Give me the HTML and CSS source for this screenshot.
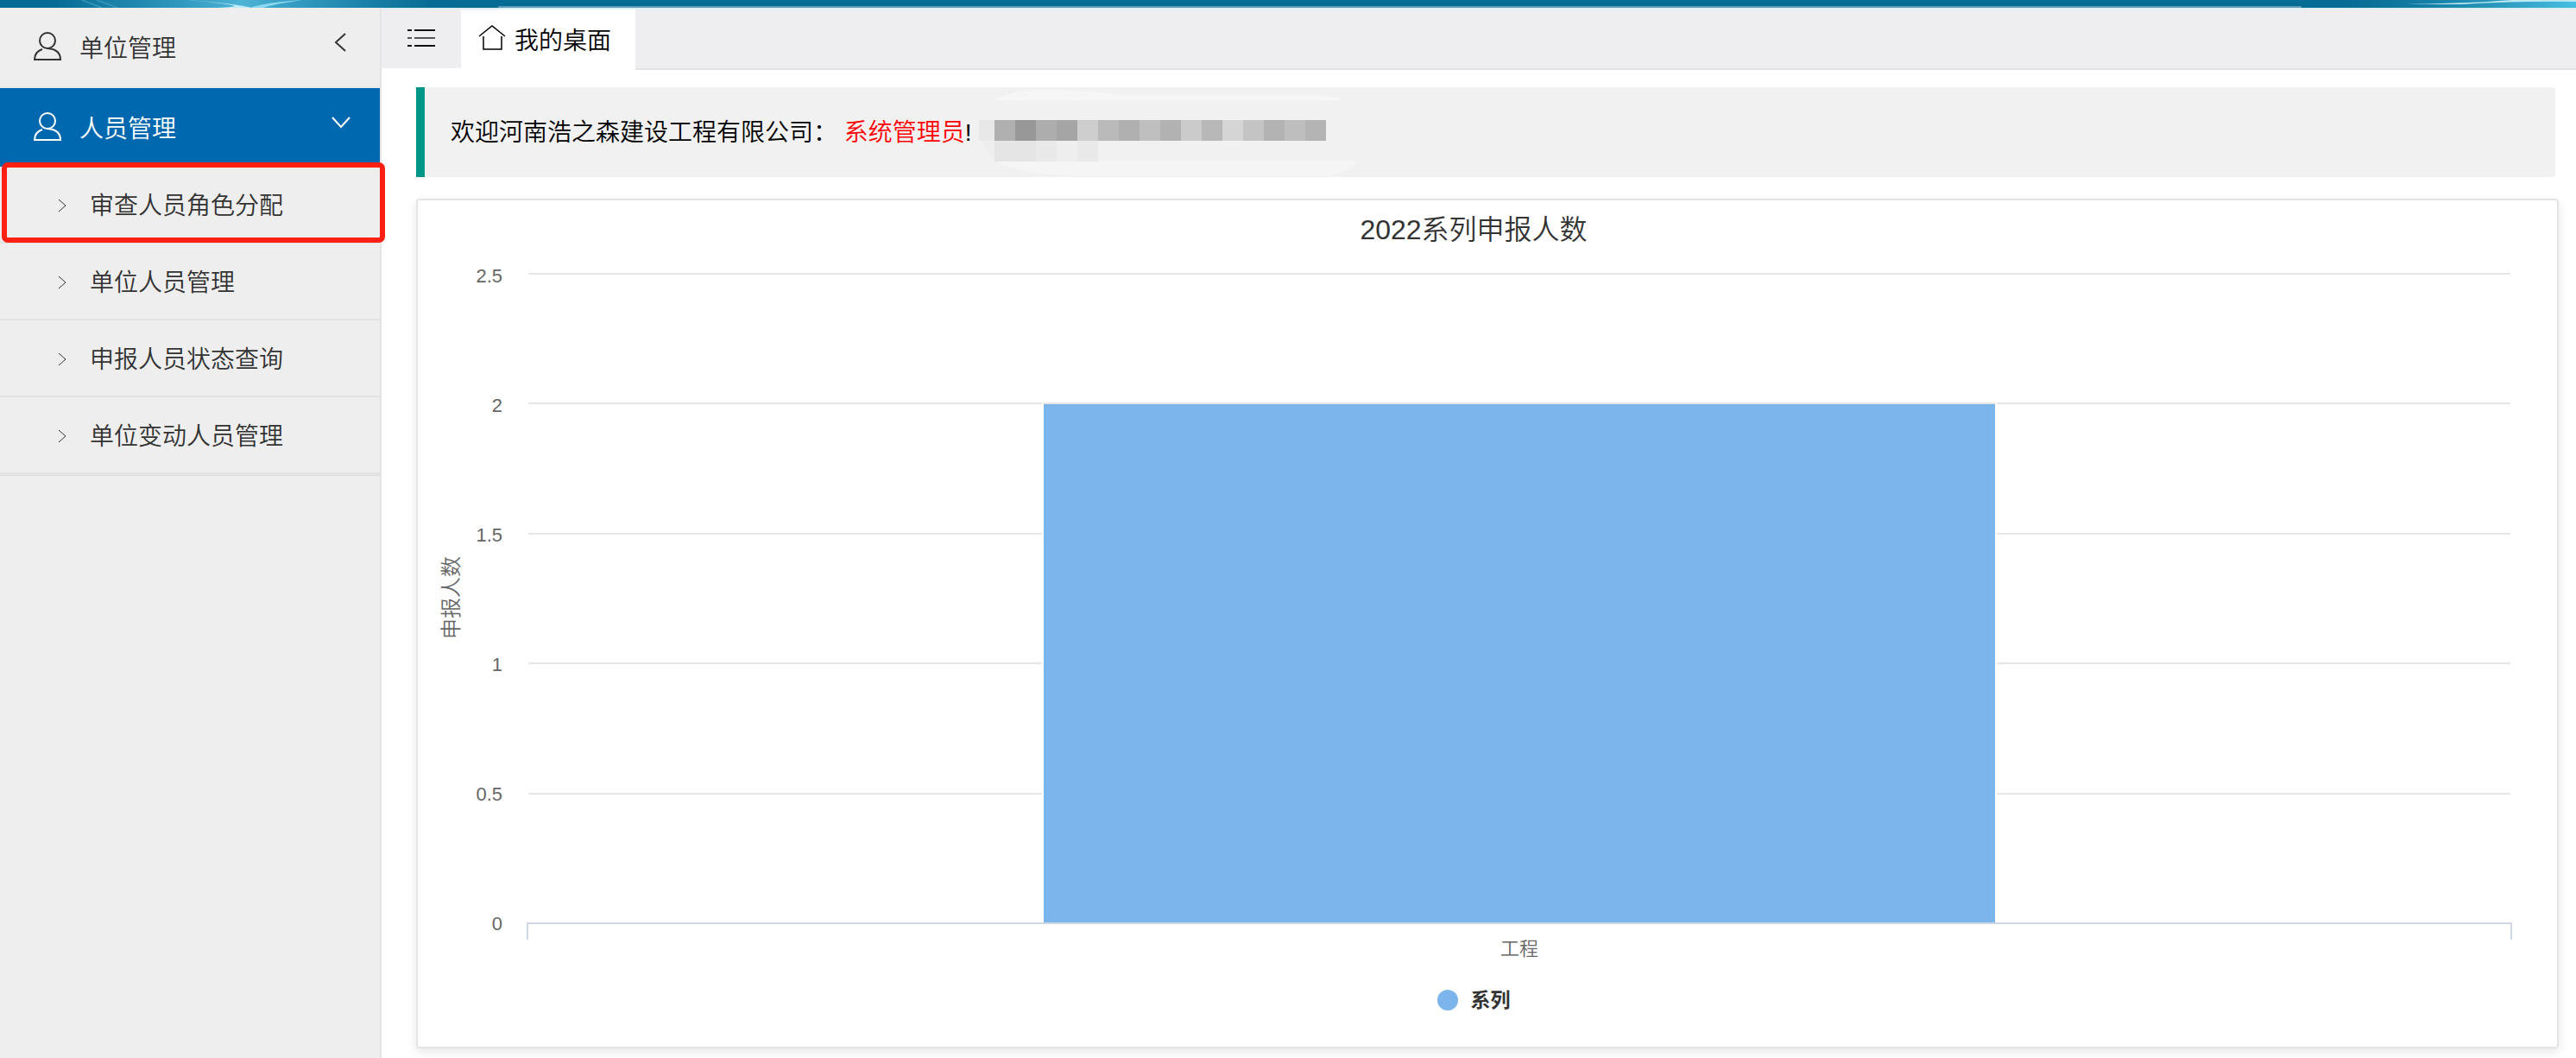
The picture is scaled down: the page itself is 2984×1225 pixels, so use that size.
FILE: index.html
```html
<!DOCTYPE html>
<html lang="zh-CN">

<head>
  <meta charset="UTF-8">
  <meta name="viewport" content="width=device-width, initial-scale=1.0">
  <title>我的桌面</title>
  <link rel="stylesheet" href="styles.css">
</head>

<body>
  <header class="banner">
    <svg width="577" height="9" viewBox="0 0 577 9">
      <defs>
        <linearGradient id="glow">
          <stop offset="0" stop-color="#3aa3c9" stop-opacity="0" />
          <stop offset="0.5" stop-color="#4db4d6" />
          <stop offset="1" stop-color="#3aa3c9" stop-opacity="0" />
        </linearGradient>
      </defs>
      <rect x="60" width="440" height="9" fill="url(#glow)" />
      <path d="M95 0 L118 9 M112 0 L136 9" stroke="#4fa9c8" stroke-width="2" opacity=".5" />
      <path d="M215 0 Q262 3 292 9 L250 9 Q285 8 262 5 Q245 2 215 0Z" fill="#bdeaf6" />
      <path d="M290 9 Q305 3 350 0 L325 4 Q310 7 305 9Z" fill="#8ad9f0" />
    </svg>
    <i class="banner-line"></i>
    <svg width="318" height="9" viewBox="66 0 318 9">
      <defs>
        <linearGradient id="glow2">
          <stop offset="0" stop-color="#2b93b8" stop-opacity="0" />
          <stop offset="1" stop-color="#48c0e2" />
        </linearGradient>
      </defs>
      <rect x="120" width="264" height="9" fill="url(#glow2)" />
      <path d="M180 5 Q260 4 310 0 L384 0 L384 2 Q320 1 250 5Z" fill="#bdeaf2" />
    </svg>
  </header>
  <div class="wrap">
    <nav class="side">
      <ul class="menu">
        <li>
          <a class="menu-item" href="#">
            <svg class="icon-user" viewBox="0 0 34 34">
              <circle cx="17" cy="10" r="9" />
              <path d="M11 20 Q2 23 2 32 H32 Q32 20 17 19" />
            </svg>
            <span>单位管理</span>
            <svg class="arrow" viewBox="0 0 22 22"><path d="M16 1 L5 11 L16 21" /></svg>
          </a>
        </li>
        <li>
          <a class="menu-item active" href="#">
            <svg class="icon-user" viewBox="0 0 34 34">
              <circle cx="17" cy="10" r="9" />
              <path d="M11 20 Q2 23 2 32 H32 Q32 20 17 19" />
            </svg>
            <span>人员管理</span>
            <svg class="arrow" viewBox="0 0 22 22"><path d="M1 5 L11 16 L21 5" /></svg>
          </a>
          <ul class="sub-menu">
            <li class="marked"><a href="#"><svg class="sub-arrow" viewBox="0 0 10 16"><path d="M1 1 L9 8 L1 15" /></svg>审查人员角色分配</a></li>
            <li><a href="#"><svg class="sub-arrow" viewBox="0 0 10 16"><path d="M1 1 L9 8 L1 15" /></svg>单位人员管理</a></li>
            <li><a href="#"><svg class="sub-arrow" viewBox="0 0 10 16"><path d="M1 1 L9 8 L1 15" /></svg>申报人员状态查询</a></li>
            <li><a href="#"><svg class="sub-arrow" viewBox="0 0 10 16"><path d="M1 1 L9 8 L1 15" /></svg>单位变动人员管理</a></li>
          </ul>
        </li>
      </ul>
    </nav>
    <main class="main">
      <div class="tabs">
        <button class="toggle" type="button" aria-label="菜单">
          <svg width="32" height="24" viewBox="0 0 32 24">
            <path d="M0 3 H5 M8 3 H32 M0 21 H5 M8 21 H32" stroke="#111" stroke-width="2" />
            <path d="M0 12 H5 M8 12 H32" stroke="#555" stroke-width="2" />
          </svg>
        </button>
        <a class="tab" href="#">
          <svg width="32" height="30" viewBox="0 0 32 30">
            <path d="M1 13 L16 1 L31 13 M6 13 V28 H27 V13" />
          </svg>
          <span>我的桌面</span>
        </a>
      </div>
      <div class="content">
        <div class="welcome">
          <p>欢迎河南浩之森建设工程有限公司：&nbsp;<span class="role">系统管理员</span>!</p>
          <svg class="mosaic" width="444" height="104" viewBox="0 0 444 104" shape-rendering="crispEdges">
            <path d="M24 14 Q50 2 90 3 Q140 4 170 9 H400 L426 13 L420 15 H24Z" fill="#f6f6f6" />
            <path d="M24 86 H444 Q440 96 410 103 H150 Q60 104 24 86Z" fill="#f5f5f5" />
            <path d="M6 38 H24 V86 Q6 66 6 38Z" fill="#eeeeee" />
            <rect x="6" y="38" width="18" height="24" fill="#e8e8e8" />
            <rect x="24" y="38" width="24" height="24" fill="#b0b0b0" />
            <rect x="48" y="38" width="24" height="24" fill="#989898" />
            <rect x="72" y="38" width="24" height="24" fill="#adadad" />
            <rect x="96" y="38" width="24" height="24" fill="#a5a5a5" />
            <rect x="120" y="38" width="24" height="24" fill="#cecece" />
            <rect x="144" y="38" width="24" height="24" fill="#bababa" />
            <rect x="168" y="38" width="24" height="24" fill="#b0b0b0" />
            <rect x="192" y="38" width="24" height="24" fill="#bfbfbf" />
            <rect x="216" y="38" width="24" height="24" fill="#b2b2b2" />
            <rect x="240" y="38" width="24" height="24" fill="#cbcbcb" />
            <rect x="264" y="38" width="24" height="24" fill="#b8b8b8" />
            <rect x="288" y="38" width="24" height="24" fill="#d5d5d5" />
            <rect x="312" y="38" width="24" height="24" fill="#c4c4c4" />
            <rect x="336" y="38" width="24" height="24" fill="#b3b3b3" />
            <rect x="360" y="38" width="24" height="24" fill="#bebebe" />
            <rect x="384" y="38" width="24" height="24" fill="#b4b4b4" />
            <rect x="24" y="62" width="48" height="24" fill="#e5e5e5" />
            <rect x="72" y="62" width="24" height="24" fill="#e9e9e9" />
            <rect x="96" y="62" width="24" height="24" fill="#eeeeee" />
            <rect x="120" y="62" width="24" height="24" fill="#e9e9e9" />
          </svg>
        </div>
        <section class="card">
          <h2 class="chart-title">2022系列申报人数</h2>
          <div class="chart">
            <div class="y-title">申报人数</div>
            <ul class="y-labels">
              <li>2.5</li>
              <li>2</li>
              <li>1.5</li>
              <li>1</li>
              <li>0.5</li>
              <li>0</li>
            </ul>
            <div class="plot">
              <div class="lines"><i></i><i></i><i></i><i></i><i></i></div>
              <div class="bar" style="height: 80%"></div>
            </div>
            <div class="x-axis"></div>
            <div class="x-label">工程</div>
          </div>
          <div class="legend"><i class="dot"></i>系列</div>
        </section>
      </div>
    </main>
  </div>
</body>

</html>
```
FILE: styles.css
```css
* {
  margin: 0;
  padding: 0;
  box-sizing: border-box;
}

body {
  display: flex;
  flex-direction: column;
  min-height: 100vh;
  background-color: #fff;
  color: #333;
  font: 350 28px/40px "Liberation Sans", "Noto Sans CJK SC", sans-serif;
}

ul {
  list-style: none;
}

a {
  color: inherit;
  text-decoration: none;
}

svg {
  display: block;
  flex: none;
  fill: none;
}

/* 顶部 */
.banner {
  display: flex;
  justify-content: space-between;
  height: 9px;
  background-color: #066c95;
}

.banner-line {
  flex: 1;
  border-bottom: 2px solid #5f9ab8;
}

.wrap {
  display: flex;
  flex: 1;
}

/* 左侧菜单 */
.side {
  width: 442px;
  flex: none;
  border-right: 2px solid #e4e4e4;
  background-color: #eee;
}

.menu-item {
  display: flex;
  align-items: center;
  height: 93px;
  padding: 0 34px 0 38px;
  border-bottom: 2px solid #e9e9e9;
}

.menu-item span {
  flex: 1;
  margin-left: 20px;
  padding-top: 4px;
}

.menu-item.active {
  height: 91px;
  border-bottom: 0;
  background-color: #0068ae;
  color: #fff;
}

.icon-user {
  width: 34px;
  height: 34px;
  margin-bottom: 2px;
  stroke: currentColor;
  stroke-width: 2;
}

.arrow {
  width: 22px;
  height: 22px;
  margin-bottom: 12px;
  stroke: currentColor;
  stroke-width: 2;
}

.sub-menu {
  border-bottom: 2px solid #e2e2e2;
}

.sub-menu li {
  position: relative;
}

.sub-menu a {
  display: flex;
  align-items: center;
  gap: 27px;
  height: 89px;
  padding-top: 4px;
  padding-left: 67px;
  border-bottom: 2px solid #e2e2e2;
}

.sub-arrow {
  width: 10px;
  height: 16px;
  margin-bottom: 2px;
  stroke: #333;
}

.marked::after {
  content: "";
  position: absolute;
  top: -5px;
  left: 2px;
  right: -6px;
  bottom: 1px;
  border: 6px solid #fb2013;
  border-radius: 7px;
  pointer-events: none;
}

/* 右侧 */
.main {
  display: flex;
  flex: 1;
  flex-direction: column;
  min-width: 0;
}

.tabs {
  display: flex;
  height: 72px;
  border-top: 2px solid #dceff7;
  border-bottom: 2px solid #e3e3e3;
  background-color: #eeeef0;
}

.toggle {
  width: 92px;
  padding-left: 30px;
  padding-bottom: 2px;
  border: 0;
  border-bottom: 2px solid #fff;
  margin-bottom: -2px;
  background: none;
}

.tab {
  display: flex;
  align-items: center;
  gap: 10px;
  height: 70px;
  padding: 4px 28px 0 20px;
  background-color: #fff;
  color: #000;
}

.tab svg {
  margin-bottom: 8px;
  stroke: #000;
  stroke-width: 1.5;
}

.content {
  display: flex;
  flex: 1;
  flex-direction: column;
  padding: 20px 20px 11px 40px;
}

.welcome {
  display: flex;
  align-items: center;
  gap: 2px;
  height: 104px;
  margin-right: 4px;
  padding-left: 30px;
  border-left: 10px solid #009688;
  border-radius: 0 4px 4px 0;
  background-color: #f1f1f1;
  color: #000;
}

.welcome p {
  padding-top: 2px;
}

.role {
  color: #f00;
}

/* 图表 */
.card {
  display: flex;
  flex: 1;
  flex-direction: column;
  margin-top: 25px;
  padding: 16px 52px 42px 26px;
  border: 2px solid #e4e4e4;
  border-radius: 4px;
  box-shadow: 0 4px 12px rgba(0, 0, 0, 0.1);
}

.chart-title {
  padding-right: 6px;
  font-size: 32px;
  line-height: 36px;
  font-weight: 350;
  text-align: center;
}

.chart {
  display: grid;
  flex: 1;
  grid-template-columns: 26px 46px 1fr;
  grid-template-rows: 1fr 20px 22px;
  margin-top: 32px;
  color: #666;
  font-size: 22px;
  line-height: 22px;
}

.y-title {
  align-self: center;
  justify-self: center;
  font-size: 24px;
  line-height: 26px;
  writing-mode: vertical-rl;
  text-orientation: sideways;
  transform: rotate(180deg);
}

.y-labels {
  display: flex;
  flex-direction: column;
  justify-content: space-between;
  margin: 4px 0 -2px;
  text-align: right;
}

.y-labels li {
  height: 0;
  line-height: 0;
}

.plot {
  display: grid;
  margin-left: 30px;
  margin-right: 2px;
}

.lines,
.bar {
  grid-area: 1 / 1;
}

.lines {
  display: flex;
  flex-direction: column;
}

.lines i {
  flex: 1;
  border-top: 2px solid #e6e6e6;
}

.bar {
  align-self: end;
  justify-self: center;
  width: 48%;
  border-top: 2px solid #e6e6e6;
  background-color: #7cb5ec;
  box-shadow: 0 0 0 2px #fff;
}

.x-axis {
  grid-column: 3;
  margin-left: 28px;
  border: 2px solid #ccd6e4;
  border-bottom: 0;
  z-index: 1;
}

.x-label {
  grid-column: 3;
  margin-left: 28px;
  text-align: center;
}

.legend {
  display: flex;
  align-items: center;
  justify-content: center;
  gap: 15px;
  margin-top: 36px;
  padding-right: 6px;
  font-size: 23px;
  line-height: 24px;
  font-weight: bold;
}

.dot {
  width: 24px;
  height: 24px;
  border-radius: 50%;
  background-color: #7cb5ec;
}
```
